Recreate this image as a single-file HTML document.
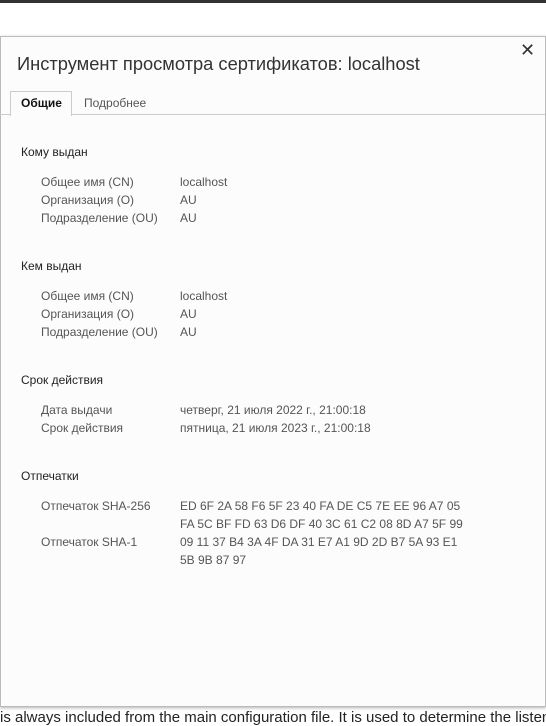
<!DOCTYPE html>
<html><head><meta charset="utf-8"><style>
body{margin:0;width:546px;height:718px;background:#fff;position:relative;overflow:hidden;font-family:"Liberation Sans","DejaVu Sans",sans-serif;}
.topbar{position:absolute;left:0;top:0;width:546px;height:3px;background:#333;}
.dlg{position:absolute;left:0;top:36px;width:544px;height:669px;background:#fcfcfc;border:1px solid #bbb;box-shadow:0 1px 3px rgba(0,0,0,.3);}
.t{position:absolute;white-space:nowrap;line-height:14px;font-size:12px;}
.h{color:#222;left:21px;}
.l{color:#555;left:41px;}
.v{color:#555;left:180px;}
.title{position:absolute;left:17px;top:53px;font-size:18.3px;color:#333;white-space:nowrap;}
.close{position:absolute;left:520px;top:40px;font-size:18px;color:#333;}
.tabline{position:absolute;left:0;top:114px;width:545px;height:1px;background:#ccc;}
.tab{position:absolute;left:10px;top:91px;width:60px;height:24px;border:1px solid #ccc;border-bottom:none;background:#fcfcfc;}
.foot{position:absolute;left:0;top:709px;font-size:15px;color:#222;white-space:nowrap;}
</style></head><body>
<div class="topbar"></div>
<div class="foot">is always included from the main configuration file. It is used to determine the listening</div>
<div class="dlg"></div>
<div class="title">Инструмент просмотра сертификатов: localhost</div>
<div class="close">✕</div>
<div class="tabline"></div>
<div class="tab"></div>
<div class="t" style="left:21px;top:96px;font-weight:bold;color:#111">Общие</div>
<div class="t" style="left:84px;top:96px;color:#555">Подробнее</div>

<div class="t h" style="top:145px">Кому выдан</div>
<div class="t l" style="top:175px">Общее имя (CN)</div><div class="t v" style="top:175px">localhost</div>
<div class="t l" style="top:193px">Организация (O)</div><div class="t v" style="top:193px">AU</div>
<div class="t l" style="top:211px">Подразделение (OU)</div><div class="t v" style="top:211px">AU</div>

<div class="t h" style="top:259px">Кем выдан</div>
<div class="t l" style="top:289px">Общее имя (CN)</div><div class="t v" style="top:289px">localhost</div>
<div class="t l" style="top:307px">Организация (O)</div><div class="t v" style="top:307px">AU</div>
<div class="t l" style="top:325px">Подразделение (OU)</div><div class="t v" style="top:325px">AU</div>

<div class="t h" style="top:373px">Срок действия</div>
<div class="t l" style="top:403px">Дата выдачи</div><div class="t v" style="top:403px">четверг, 21 июля 2022 г., 21:00:18</div>
<div class="t l" style="top:421px">Срок действия</div><div class="t v" style="top:421px">пятница, 21 июля 2023 г., 21:00:18</div>

<div class="t h" style="top:469px">Отпечатки</div>
<div class="t l" style="top:499px">Отпечаток SHA-256</div><div class="t v" style="top:499px">ED 6F 2A 58 F6 5F 23 40 FA DE C5 7E EE 96 A7 05</div>
<div class="t v" style="top:517px">FA 5C BF FD 63 D6 DF 40 3C 61 C2 08 8D A7 5F 99</div>
<div class="t l" style="top:535px">Отпечаток SHA-1</div><div class="t v" style="top:535px">09 11 37 B4 3A 4F DA 31 E7 A1 9D 2D B7 5A 93 E1</div>
<div class="t v" style="top:553px">5B 9B 87 97</div>
</body></html>
